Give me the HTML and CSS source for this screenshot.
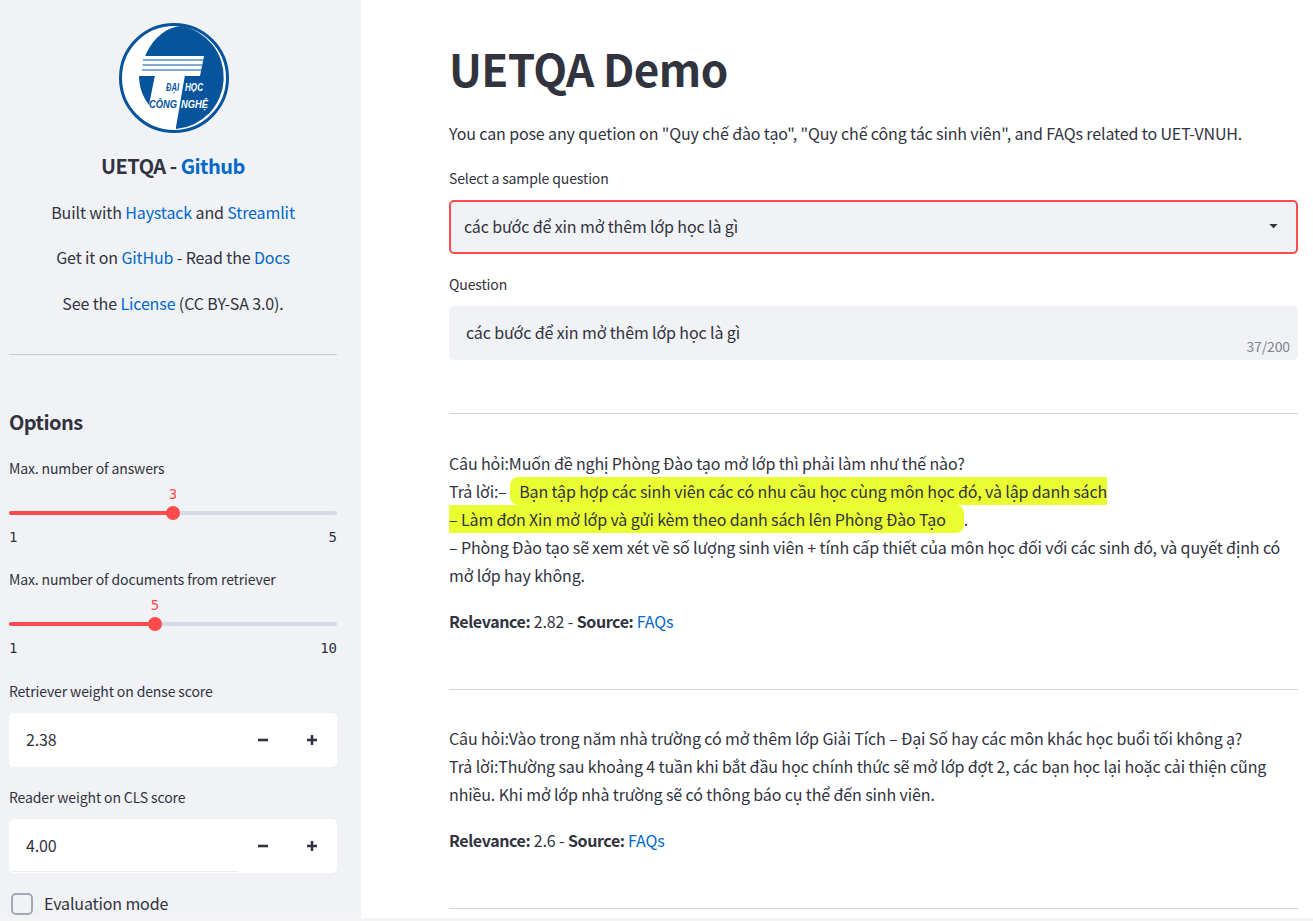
FILE: index.html
```html
<!DOCTYPE html>
<html lang="en">
<head>
    <meta charset="UTF-8">
    <meta name="viewport" content="width=device-width, initial-scale=1.0">
    <title>UETQA Demo</title>
    <link rel="stylesheet" href="styles.css">
</head>
<body>
    <div class="app">
        <!-- Sidebar -->
        <aside class="sidebar">
            <svg class="logo" viewBox="0 0 110 110" role="img" aria-label="UET logo">
                <circle cx="55" cy="55" r="53.5" fill="#fff" stroke="#05549c" stroke-width="3"/>
                <path d="M27 31C35 14 48 4 62 3A52 52 0 0 1 57 106L57 104L66 52L21 52C22 45 24 38 27 31Z" fill="#05549c"/>
                <path d="M20 52L36 52L30 82C23 73 20 63 20 52Z" fill="#05549c"/>
                <path d="M22 33H85L81 53H20Z" fill="#fff"/>
                <path d="M24 37H84M23.500 42H83M23 47H82" stroke="#05549c" stroke-width="1.2" fill="none"/>
                <text class="logo-text" x="47" y="68" fill="#05549c" textLength="13" lengthAdjust="spacingAndGlyphs">ĐẠI</text>
                <text class="logo-text" x="66" y="68" fill="#fff" textLength="18" lengthAdjust="spacingAndGlyphs">HỌC</text>
                <text class="logo-text" x="30" y="85" fill="#05549c" textLength="28" lengthAdjust="spacingAndGlyphs">CÔNG</text>
                <text class="logo-text" x="62" y="85" fill="#fff" textLength="27" lengthAdjust="spacingAndGlyphs">NGHỆ</text>
            </svg>
            <h3 class="brand">UETQA - <a href="#">Github</a></h3>
            <p class="side-text">Built with <a href="#">Haystack</a> and <a href="#">Streamlit</a></p>
            <p class="side-text">Get it on <a href="#">GitHub</a> - Read the <a href="#">Docs</a></p>
            <p class="side-text side-license">See the <a href="#">License</a> (CC BY-SA 3.0).</p>
            <hr class="side-rule">

            <h2 class="options">Options</h2>

            <div class="slider">
                <label>Max. number of answers</label>
                <div class="slider-track">
                    <div class="slider-fill fill-answers"></div>
                    <span class="slider-thumb"><span class="slider-value">3</span></span>
                </div>
                <div class="slider-range"><span>1</span><span>5</span></div>
            </div>

            <div class="slider">
                <label>Max. number of documents from retriever</label>
                <div class="slider-track">
                    <div class="slider-fill fill-docs"></div>
                    <span class="slider-thumb"><span class="slider-value">5</span></span>
                </div>
                <div class="slider-range"><span>1</span><span>10</span></div>
            </div>

            <div class="number-field">
                <label>Retriever weight on dense score</label>
                <div class="number-input">
                    <span class="number-value">2.38</span>
                    <svg class="step" viewBox="0 0 10 10"><path d="M0 5H10" stroke="#31333f" stroke-width="2.600"/></svg>
                    <svg class="step" viewBox="0 0 10 10"><path d="M0 5H10M5 0V10" stroke="#31333f" stroke-width="2.600"/></svg>
                </div>
            </div>

            <div class="number-field">
                <label>Reader weight on CLS score</label>
                <div class="number-input">
                    <span class="number-value">4.00</span>
                    <svg class="step" viewBox="0 0 10 10"><path d="M0 5H10" stroke="#31333f" stroke-width="2.600"/></svg>
                    <svg class="step" viewBox="0 0 10 10"><path d="M0 5H10M5 0V10" stroke="#31333f" stroke-width="2.600"/></svg>
                    <span class="number-line"></span>
                </div>
            </div>

            <div class="checkbox"><span class="box"></span>Evaluation mode</div>
        </aside>

        <!-- Main content -->
        <main class="main">
            <h1>UETQA Demo</h1>
            <p class="intro">You can pose any quetion on "Quy chế đào tạo", "Quy chế công tác sinh viên", and FAQs related to UET-VNUH.</p>

            <label class="field-label">Select a sample question</label>
            <div class="select">
                <span>các bước để xin mở thêm lớp học là gì</span>
                <svg class="caret" viewBox="0 0 10 6"><path d="M0 0H10L5 5Z" fill="#31333f"/></svg>
            </div>

            <label class="field-label question-label">Question</label>
            <div class="textarea">
                các bước để xin mở thêm lớp học là gì
                <span class="counter">37/200</span>
            </div>

            <hr class="rule first-rule">

            <div class="answer">
                <p>Câu hỏi:Muốn đề nghị Phòng Đào tạo mở lớp thì phải làm như thế nào?<br>
                Trả lời:– <mark>Bạn tập hợp các sinh viên các có nhu cầu học cùng môn học đó, và lập danh sách<br>– Làm đơn Xin mở lớp và gửi kèm theo danh sách lên Phòng Đào Tạo</mark>.<br>
                – Phòng Đào tạo sẽ xem xét về số lượng sinh viên + tính cấp thiết của môn học đối với các sinh đó, và quyết định có mở lớp hay không.</p>
                <p class="meta"><b>Relevance:</b> 2.82 - <b>Source:</b> <a href="#">FAQs</a></p>
            </div>

            <hr class="rule">

            <div class="answer answer-second">
                <p>Câu hỏi:Vào trong năm nhà trường có mở thêm lớp Giải Tích – Đại Số hay các môn khác học buổi tối không ạ?<br>
                Trả lời:Thường sau khoảng 4 tuần khi bắt đầu học chính thức sẽ mở lớp đợt 2, các bạn học lại hoặc cải thiện cũng nhiều. Khi mở lớp nhà trường sẽ có thông báo cụ thể đến sinh viên.</p>
                <p class="meta"><b>Relevance:</b> 2.6 - <b>Source:</b> <a href="#">FAQs</a></p>
            </div>

            <hr class="rule">
        </main>
    </div>
</body>
</html>
```

FILE: styles.css
```css
/* Reset and base styles */
* {
    box-sizing: border-box;
    margin: 0;
    padding: 0;
}

html,
body {
    height: 100%;
    overflow: hidden;
}

body {
    font-family: "Noto Sans CJK SC", "Noto Sans", sans-serif;
    font-size: 16px;
    line-height: 1.6;
    letter-spacing: -0.12px;
    color: #31333f;
    background-color: #fff;
}

a {
    color: #0068c9;
    text-decoration: none;
}

.app {
    display: flex;
    height: 921px;
    border-bottom: 3px solid #f4f4f4;
    overflow: hidden;
}

/* Sidebar */
.sidebar {
    flex: 0 0 361px;
    display: flex;
    flex-direction: column;
    padding: 23px 24px 0 9px;
    background-color: #f0f2f6;
}

.logo {
    flex: none;
    width: 110px;
    height: 110px;
    margin-left: 110px;
}

.logo-text {
    font-family: "Liberation Sans", sans-serif;
    font-size: 11px;
    font-weight: 700;
    font-style: italic;
    letter-spacing: 0;
}

.brand {
    margin-top: 17px;
    font-size: 20px;
    font-weight: 700;
    line-height: 32px;
    letter-spacing: -0.5px;
    text-align: center;
}

.side-text {
    margin-top: 19px;
    line-height: 26px;
    text-align: center;
}

.brand + .side-text {
    margin-top: 17px;
}

.side-license {
    margin-top: 20px;
}

.side-rule {
    margin-top: 38px;
    border: none;
    border-top: 1px solid #c9cbd1;
}

.options {
    margin-top: 49px;
    font-size: 20px;
    font-weight: 700;
    line-height: 36px;
    letter-spacing: -0.55px;
}

.slider,
.number-field {
    display: flex;
    flex-direction: column;
}

label {
    display: block;
    font-size: 14px;
    line-height: 22px;
}

.slider {
    margin-top: 17px;
}

.slider + .slider {
    margin-top: 20px;
}

.slider-track {
    position: relative;
    height: 4px;
    margin-top: 32px;
    border-radius: 2px;
    background-color: #d5dae5;
}

.slider-fill {
    height: 100%;
    border-radius: 2px;
    background-color: #ff4b4b;
}

.fill-answers {
    width: 50%;
}

.fill-docs {
    width: 44.500%;
}

.slider-thumb {
    position: absolute;
    top: -5px;
    width: 14px;
    height: 14px;
    margin-left: -7px;
    border-radius: 50%;
    background-color: #ff4b4b;
}

.fill-answers + .slider-thumb {
    left: 50%;
}

.fill-docs + .slider-thumb {
    left: 44.500%;
}

.slider-value {
    position: absolute;
    left: 0;
    right: 0;
    top: -23px;
    font-family: "DejaVu Sans Mono", monospace;
    font-size: 14px;
    line-height: 22px;
    letter-spacing: 0;
    text-align: center;
    color: #ff4b4b;
}

.slider-range {
    display: flex;
    justify-content: space-between;
    margin-top: 11px;
    font-family: "DejaVu Sans Mono", monospace;
    font-size: 14px;
    line-height: 22px;
    letter-spacing: 0;
}

.number-field {
    margin-top: 21px;
}

.number-field + .number-field {
    margin-top: 19px;
}

.number-input {
    position: relative;
    display: flex;
    align-items: center;
    height: 54px;
    margin-top: 11px;
    border-radius: 5px;
    background-color: #fff;
}

.number-value {
    flex: 1;
    padding-left: 17px;
}

.step {
    flex: none;
    width: 10px;
    height: 10px;
    margin-right: 39px;
}

.step + .step {
    margin-right: 20px;
}

.number-line {
    position: absolute;
    left: 3px;
    bottom: 1px;
    width: 226px;
    height: 1px;
    background-color: #ececec;
}

.checkbox {
    display: flex;
    align-items: center;
    gap: 11px;
    margin-top: 18px;
    padding-left: 2px;
}

.box {
    width: 22px;
    height: 22px;
    border: 2px solid #a3a8b4;
    border-radius: 5px;
}

/* Main column */
.main {
    flex: 1;
    padding: 42px 15px 0 88px;
}

h1 {
    font-size: 44px;
    font-weight: 700;
    line-height: 1.2;
    letter-spacing: -0.6px;
}

.intro {
    margin-top: 25px;
    line-height: 26px;
}

.field-label {
    margin-top: 21px;
}

.select {
    display: flex;
    align-items: center;
    justify-content: space-between;
    height: 54px;
    margin-top: 11px;
    padding: 0 18px 0 13px;
    border: 2px solid #ff4b4b;
    border-radius: 5px;
    background-color: #f0f2f6;
}

.caret {
    width: 9px;
    height: 5px;
}

.question-label {
    margin-top: 19px;
}

.textarea {
    position: relative;
    height: 54px;
    margin-top: 11px;
    padding: 14px 17px;
    border-radius: 5px;
    background-color: #f0f2f6;
}

.counter {
    position: absolute;
    right: 8px;
    bottom: 3px;
    font-size: 14px;
    line-height: 22px;
    color: #808495;
}

.rule {
    border: none;
    border-top: 1px solid #d3d5d9;
}

.first-rule {
    margin-top: 53px;
}

.answer {
    padding: 35px 0 54px;
}

.answer-second {
    padding: 34px 0 54px;
}

.answer p {
    line-height: 28px;
}

.answer .meta {
    margin-top: 18px;
}

mark {
    padding: 2px 18px 2px 9px;
    border-radius: 8px;
    color: inherit;
    background-color: #e9ff32;
}

b {
    font-weight: 700;
    letter-spacing: -0.4px;
}
```
